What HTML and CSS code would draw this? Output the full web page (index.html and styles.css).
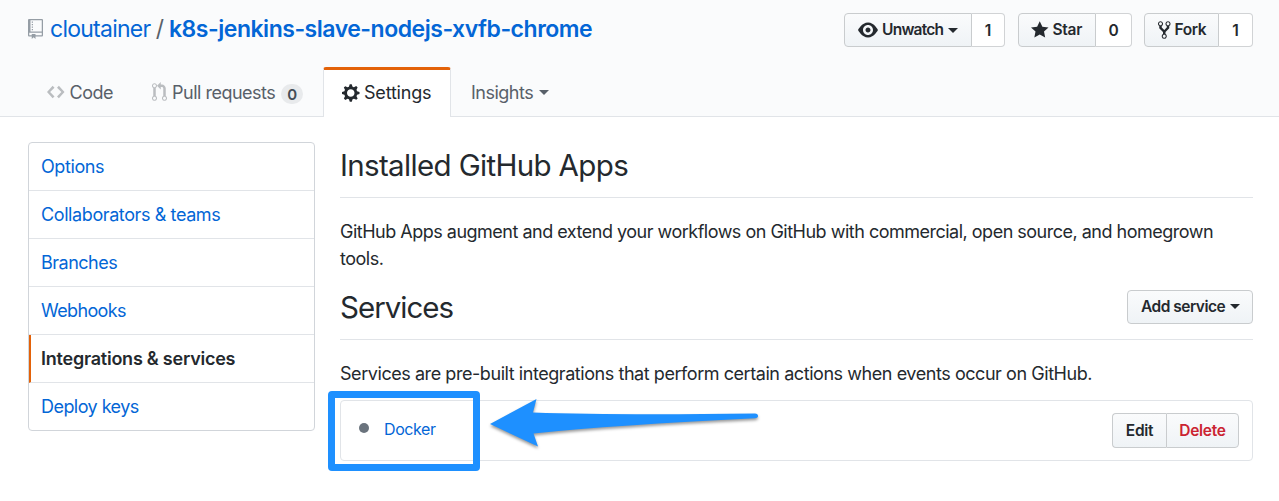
FILE: index.html
```html
<!DOCTYPE html>
<html lang="en">
<head>
<meta charset="utf-8">
<title>Installed GitHub Apps</title>
<link rel="stylesheet" href="styles.css">
</head>
<body>
<header class="repohead">
  <div class="repohead-top">
    <h1 class="repo-title">
      <svg class="icon-repo" width="15" height="20" viewBox="0 0 12 16"><path d="M4 9H3V8h1v1zm0-3H3v1h1V6zm0-2H3v1h1V4zm0-2H3v1h1V2zm8-1v12c0 .55-.45 1-1 1H6v2l-1.5-1.5L3 16v-2H1c-.55 0-1-.45-1-1V1c0-.55.45-1 1-1h10c.55 0 1 .45 1 1zm-1 10H1v2h2v-1h3v1h5v-2zm0-10H2v9h9V1z"/></svg>
      <a class="owner">cloutainer</a><span class="slash">/</span><a class="repo">k8s-jenkins-slave-nodejs-xvfb-chrome</a>
    </h1>
    <div class="actions">
      <div class="social social-watch">
        <a class="btn social-btn unwatch"><svg width="20" height="20" viewBox="0 0 16 16"><path d="M8.06 2C3 2 0 8 0 8s3 6 8.06 6C13 14 16 8 16 8s-3-6-7.94-6zM8 12c-2.2 0-4-1.78-4-4 0-2.2 1.8-4 4-4 2.22 0 4 1.8 4 4 0 2.22-1.78 4-4 4zm2-4c0 1.11-.89 2-2 2-1.11 0-2-.89-2-2 0-1.11.89-2 2-2 1.11 0 2 .89 2 2z"/></svg><span class="label">Unwatch</span><i class="caret"></i></a><a class="count">1</a>
      </div>
      <div class="social">
        <a class="btn social-btn star"><svg width="17.5" height="20" viewBox="0 0 14 16"><path d="M14 6l-4.9-.64L7 1 4.9 5.36 0 6l3.6 3.26L2.67 14 7 11.67 11.33 14l-.93-4.74z"/></svg><span class="label">Star</span></a><a class="count count-star">0</a>
      </div>
      <div class="social">
        <a class="btn social-btn fork"><svg width="12.5" height="20" viewBox="0 0 10 16"><path d="M8 1a1.993 1.993 0 0 0-1 3.72V6L5 8 3 6V4.72A1.993 1.993 0 0 0 2 1a1.993 1.993 0 0 0-1 3.72V6.5l3 3v1.78A1.993 1.993 0 0 0 5 15a1.993 1.993 0 0 0 1-3.72V9.5l3-3V4.72A1.993 1.993 0 0 0 8 1zM2 4.2C1.34 4.2.8 3.65.8 3c0-.65.55-1.2 1.2-1.2.65 0 1.2.55 1.2 1.2 0 .65-.55 1.2-1.2 1.2zm3 10c-.66 0-1.2-.55-1.2-1.2 0-.65.55-1.2 1.2-1.2.65 0 1.2.55 1.2 1.2 0 .65-.55 1.2-1.2 1.2zm3-10c-.66 0-1.2-.55-1.2-1.2 0-.65.55-1.2 1.2-1.2.65 0 1.2.55 1.2 1.2 0 .65-.55 1.2-1.2 1.2z"/></svg><span class="label">Fork</span></a><a class="count count-fork">1</a>
      </div>
    </div>
  </div>
  <nav class="tabs">
    <a class="tab tab-code"><svg width="17.5" height="20" viewBox="0 0 14 16"><path d="M9.5 3L8 4.5 11.5 8 8 11.5 9.5 13 14 8 9.5 3zm-5 0L0 8l4.5 5L6 11.5 2.5 8 6 4.5 4.5 3z"/></svg><span>Code</span></a>
    <a class="tab tab-pulls"><svg width="15" height="20" viewBox="0 0 12 16"><path d="M11 11.28V5c-.03-.78-.34-1.47-.94-2.06C9.46 2.35 8.78 2.03 8 2H7V0L4 3l3 3V4h1c.27.02.48.11.69.31.21.2.3.42.31.69v6.28A1.993 1.993 0 0 0 10 15a1.993 1.993 0 0 0 1-3.72zm-1 2.92c-.66 0-1.2-.55-1.2-1.2 0-.65.55-1.2 1.2-1.2.65 0 1.2.55 1.2 1.2 0 .65-.55 1.2-1.2 1.2zM4 3c0-1.11-.89-2-2-2a1.993 1.993 0 0 0-1 3.72v6.56A1.993 1.993 0 0 0 2 15a1.993 1.993 0 0 0 1-3.72V4.72c.59-.34 1-.98 1-1.72zm-.8 10c0 .66-.55 1.2-1.2 1.2-.65 0-1.2-.55-1.2-1.2 0-.65.55-1.2 1.2-1.2.65 0 1.2.55 1.2 1.2zM2 4.2C1.34 4.2.8 3.65.8 3c0-.65.55-1.2 1.2-1.2.65 0 1.2.55 1.2 1.2 0 .65-.55 1.2-1.2 1.2z"/></svg><span class="pulls-label">Pull requests</span><span class="counter">0</span></a>
    <a class="tab tab-settings selected"><svg width="17.5" height="20" viewBox="0 0 14 16"><path d="M14 8.77v-1.6l-1.94-.64-.45-1.09.88-1.84-1.13-1.13-1.81.91-1.09-.45-.69-1.92h-1.6l-.63 1.94-1.11.45-1.84-.88-1.13 1.13.91 1.81-.45 1.09L0 7.23v1.59l1.94.64.45 1.09-.88 1.84 1.13 1.13 1.81-.91 1.09.45.69 1.92h1.59l.63-1.94 1.11-.45 1.84.88 1.13-1.13-.92-1.81.47-1.09L14 8.75v.02zM7 11c-1.66 0-3-1.34-3-3s1.34-3 3-3 3 1.34 3 3-1.34 3-3 3z"/></svg><span>Settings</span></a>
    <a class="tab tab-insights"><span class="insights-label">Insights</span><i class="caret"></i></a>
  </nav>
</header>
<main class="layout">
  <nav class="menu">
    <a class="menu-item m-options">Options</a>
    <a class="menu-item m-collab">Collaborators &amp; teams</a>
    <a class="menu-item m-branches">Branches</a>
    <a class="menu-item m-webhooks">Webhooks</a>
    <a class="menu-item active">Integrations &amp; services</a>
    <a class="menu-item m-keys">Deploy keys</a>
  </nav>
  <section class="content">
    <div class="subhead"><h2 class="h-apps">Installed GitHub Apps</h2></div>
    <p class="intro">GitHub Apps augment and extend your workflows on GitHub with commercial, open source, and homegrown<br>tools.</p>
    <div class="subhead subhead-services"><h2 class="h-services">Services</h2><a class="btn add"><span>Add service</span><i class="caret"></i></a></div>
    <p class="about">Services are pre-built integrations that perform certain actions when events occur on GitHub.</p>
    <div class="service">
      <span class="dot"></span><a class="service-name">Docker</a>
      <div class="group"><a class="btn edit">Edit</a><a class="btn delete">Delete</a></div>
      <div class="highlight"></div>
      <svg class="arrow" width="280" height="60" viewBox="0 0 280 60"><path d="M5 29L51.500 4 48 17.500Q130 20.300 270 18.500Q273 18.700 273 21Q273 23 270 23.300Q130 30 48.500 38.500L53 51.500Z"/></svg>
    </div>
  </section>
</main>
</body>
</html>
```

FILE: styles.css
```css
* { box-sizing: border-box; }
body { margin: 0; height: 501px; overflow: hidden; background: #fff; color: #24292e; font-family: Inter, "Liberation Sans", sans-serif; font-size: 18px; }
h1, h2, p { margin: 0; font-weight: 400; }
svg { display: block; flex: none; fill: currentColor; }
a { white-space: nowrap; }

.repohead { height: 117px; background: #fafbfc; border-bottom: 1px solid #e1e4e8; display: flex; flex-direction: column; justify-content: space-between; }
.repohead-top { display: flex; justify-content: space-between; padding: 13px 26px 0 28px; }
.repo-title { display: flex; height: 32px; align-items: center; font-size: 23px; line-height: 32px; color: #0366d6; white-space: nowrap; }
.icon-repo { color: #959da5; margin: 0 7px 0 0; }
.owner { width: 101px; letter-spacing: -0.75px; }
.slash { width: 18px; text-align: center; color: #586069; }
.repo { font-weight: 600; letter-spacing: -0.48px; }

.actions { display: flex; gap: 12px; }
.social { display: flex; }
.social-watch { margin-right: 1px; }
.btn { display: flex; align-items: center; height: 34px; border: 1px solid #c9ccce; border-radius: 4px; background: linear-gradient(#fafbfc, #eff3f6); color: #24292e; font-size: 15.500px; font-weight: 600; letter-spacing: -0.3px; }
.social-btn { border-radius: 4px 0 0 4px; padding-left: 13px; }
.social-btn svg { margin-right: 4px; }
.social-btn .label { padding-bottom: 1px; }
.unwatch { width: 128px; letter-spacing: -0.75px; }
.star { width: 78px; padding-left: 12px; }
.fork { width: 75px; letter-spacing: -0.4px; }
.count { width: 33px; height: 34px; border: 1px solid #d1d3d5; border-left: 0; border-radius: 0 4px 4px 0; background: #fff; font-size: 15.500px; font-weight: 600; line-height: 34px; text-align: center; }
.count-star { width: 36px; }
.count-fork { width: 34px; }
.caret { width: 0; height: 0; margin-left: 5px; border: 5px solid transparent; border-top-color: currentColor; border-bottom: 0; }

.tabs { display: flex; height: 50px; margin-bottom: -1px; padding-left: 47px; }
.tab { display: flex; align-items: center; height: 50px; color: #586069; letter-spacing: -0.5px; }
.tab svg { margin-right: 4px; color: #babdc0; }
.tab-code { width: 105px; }
.tab-code svg { margin-right: 5px; }
.tab-pulls { width: 171px; }
.tab-pulls svg { margin-right: 5px; }
.pulls-label { width: 104px; }
.counter { width: 22px; height: 20px; margin: 3px 0 0 5px; border-radius: 10px; background: #e8eaec; color: #444d56; font-size: 15px; font-weight: 600; line-height: 21px; text-align: center; }
.tab-settings { width: 128px; padding: 0 0 2px 18px; border: 1px solid #e1e4e8; border-top: 3px solid #e36209; border-bottom: 0; border-radius: 3px 3px 0 0; background: #fff; color: #24292e; letter-spacing: -0.2px; }
.tab-settings svg { margin-right: 4.500px; color: #24292e; }
.tab-insights { padding-left: 20px; }
.insights-label { width: 63px; }

.layout { display: flex; gap: 25px; padding: 25px 26px 0 28px; }
.menu { width: 287px; height: 289px; border: 1px solid #d1d5da; border-radius: 4px; }
.menu-item { display: flex; align-items: center; height: 48px; padding-left: 12px; border-bottom: 1px solid #e1e4e8; color: #0366d6; letter-spacing: -0.4px; }
.menu-item:last-child { height: 47px; border-bottom: 0; }
.menu-item.active { padding-left: 10px; border-left: 2px solid #e36209; color: #24292e; font-weight: 600; letter-spacing: -0.23px; }
.m-branches { letter-spacing: -0.5px; }
.m-webhooks { letter-spacing: -0.65px; }
.m-keys { letter-spacing: -0.55px; }

.content { flex: 1; min-width: 0; }
.subhead { display: flex; justify-content: space-between; height: 56px; border-bottom: 1px solid #e1e4e8; }
.subhead h2 { font-size: 29.500px; line-height: 46px; letter-spacing: -0.65px; }
.subhead .h-services { padding-top: 12px; letter-spacing: -1px; }
.intro { margin-top: 20px; line-height: 27px; letter-spacing: -0.5px; white-space: nowrap; }
.subhead-services { height: 68px; }
.add { width: 126px; margin-top: 18px; padding: 0 0 1px 13px; letter-spacing: -0.5px; }
.about { margin-top: 20px; line-height: 27px; letter-spacing: -0.44px; white-space: nowrap; }
.service { position: relative; display: flex; align-items: center; height: 61px; margin-top: 13px; padding: 0 13px 0 18px; border: 1px solid #e1e4e8; border-radius: 4px; }
.dot { width: 10px; height: 10px; margin: -5px 15px 0 0; border-radius: 50%; background: #6a737d; }
.service-name { margin-top: -3px; color: #0366d6; font-size: 16px; letter-spacing: -0.4px; }
.group { display: flex; margin-left: auto; }
.group .btn { height: 35px; justify-content: center; }
.edit { width: 54px; border-right: 0; border-radius: 4px 0 0 4px; }
.group .delete { width: 73px; border-radius: 0 4px 4px 0; color: #cb2431; }
.highlight { position: absolute; left: -13px; top: -10px; width: 152px; height: 80px; border: 7px solid #1e90ff; border-radius: 4px; }
.arrow { position: absolute; left: 144px; top: -6px; fill: #1e90ff; filter: drop-shadow(0 2px 1.500px rgba(0, 0, 0, .4)); }
```
